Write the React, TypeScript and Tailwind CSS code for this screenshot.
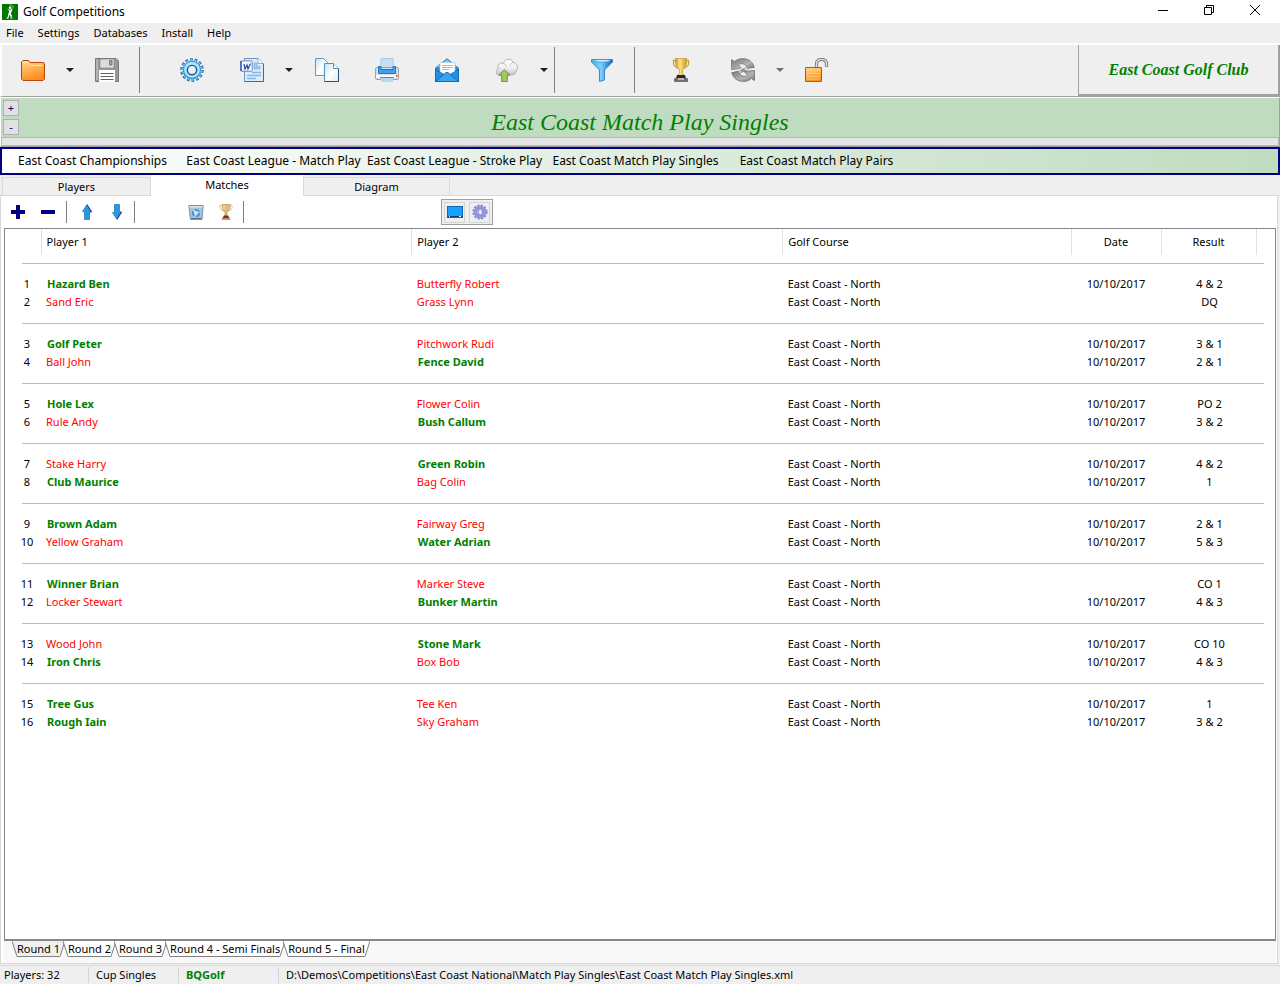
import { useState } from "react"
import type { ReactNode } from "react"

const menus = ["File", "Settings", "Databases", "Install", "Help"]

const competitions = [
  "East Coast Championships",
  "East Coast League - Match Play",
  "East Coast League - Stroke Play",
  "East Coast Match Play Singles",
  "East Coast Match Play Pairs",
]

const rounds = ["Round 1", "Round 2", "Round 3", "Round 4 - Semi Finals", "Round 5 - Final"]

interface Match {
  p1: string
  p2: string
  winner: 0 | 1 | 2
  date: string
  result: string
}

const D = "10/10/2017"

const matches: Match[] = [
  { p1: "Hazard Ben", p2: "Butterfly Robert", winner: 1, date: D, result: "4 & 2" },
  { p1: "Sand Eric", p2: "Grass Lynn", winner: 0, date: "", result: "DQ" },
  { p1: "Golf Peter", p2: "Pitchwork Rudi", winner: 1, date: D, result: "3 & 1" },
  { p1: "Ball John", p2: "Fence David", winner: 2, date: D, result: "2 & 1" },
  { p1: "Hole Lex", p2: "Flower Colin", winner: 1, date: D, result: "PO 2" },
  { p1: "Rule Andy", p2: "Bush Callum", winner: 2, date: D, result: "3 & 2" },
  { p1: "Stake Harry", p2: "Green Robin", winner: 2, date: D, result: "4 & 2" },
  { p1: "Club Maurice", p2: "Bag Colin", winner: 1, date: D, result: "1" },
  { p1: "Brown Adam", p2: "Fairway Greg", winner: 1, date: D, result: "2 & 1" },
  { p1: "Yellow Graham", p2: "Water Adrian", winner: 2, date: D, result: "5 & 3" },
  { p1: "Winner Brian", p2: "Marker Steve", winner: 1, date: "", result: "CO 1" },
  { p1: "Locker Stewart", p2: "Bunker Martin", winner: 2, date: D, result: "4 & 3" },
  { p1: "Wood John", p2: "Stone Mark", winner: 2, date: D, result: "CO 10" },
  { p1: "Iron Chris", p2: "Box Bob", winner: 1, date: D, result: "4 & 3" },
  { p1: "Tree Gus", p2: "Tee Ken", winner: 1, date: D, result: "1" },
  { p1: "Rough Iain", p2: "Sky Graham", winner: 1, date: D, result: "3 & 2" },
]

function Gradients() {
  return (
    <svg width="0" height="0" className="absolute" aria-hidden="true">
      <defs>
        <linearGradient id="orange" x1="0" y1="0" x2="0.4" y2="1">
          <stop offset="0" stopColor="#ffd890" />
          <stop offset="1" stopColor="#ff8c1c" />
        </linearGradient>
        <linearGradient id="blue" x1="0" y1="0" x2="0" y2="1">
          <stop offset="0" stopColor="#a4e0ff" />
          <stop offset="1" stopColor="#44a8ec" />
        </linearGradient>
        <linearGradient id="funnel" x1="0" y1="0" x2="1" y2="0">
          <stop offset="0" stopColor="#48b4f4" />
          <stop offset="0.45" stopColor="#7cd0fc" />
          <stop offset="1" stopColor="#0c5cc0" />
        </linearGradient>
        <linearGradient id="paper" x1="0" y1="0" x2="1" y2="1">
          <stop offset="0" stopColor="#c4dcec" />
          <stop offset="0.5" stopColor="#ffffff" />
          <stop offset="1" stopColor="#dcecf6" />
        </linearGradient>
        <linearGradient id="steel" x1="0" y1="0" x2="1" y2="1">
          <stop offset="0" stopColor="#747474" />
          <stop offset="0.6" stopColor="#b4b4b4" />
          <stop offset="1" stopColor="#6c6c6c" />
        </linearGradient>
        <linearGradient id="gold" x1="0" y1="0" x2="1" y2="0">
          <stop offset="0" stopColor="#c88c1c" />
          <stop offset="0.4" stopColor="#fce48c" />
          <stop offset="1" stopColor="#cc9420" />
        </linearGradient>
        <linearGradient id="cloud" x1="0" y1="0" x2="0" y2="1">
          <stop offset="0" stopColor="#ffffff" />
          <stop offset="0.5" stopColor="#f0f0f4" />
          <stop offset="1" stopColor="#b8b8c0" />
        </linearGradient>
      </defs>
    </svg>
  )
}

function Icon({ size = 24, children }: { size?: number; children: ReactNode }) {
  return (
    <svg width={size} height={size} viewBox={`0 0 ${size} ${size}`} aria-hidden="true" className="shrink-0">
      {children}
    </svg>
  )
}

const GolferIcon = () => (
  <Icon size={16}>
    <rect width="16" height="16" fill="#007800" />
    <path d="M9.500 5 11.500 2.500 7 .8" fill="none" stroke="#8cc08c" strokeWidth="0.800" />
    <circle cx="8" cy="3.800" r="1.200" fill="#fff" />
    <path d="M5 4.800 8 6 10.500 4.500 9.600 8 8.600 9.500 10 11.600 9.600 14 11 14.800H8.800L8.400 12 7.400 10.800 6.400 14.400 4.400 15 5.600 13 6.500 9.400 7.200 7Z" fill="#fff" />
  </Icon>
)

const FolderIcon = () => (
  <Icon>
    <path d="M.5 4.2 2 2.5H7.5L9 4.5H22.5L23.5 6V21L22 22.5H2L.5 21Z" fill="url(#orange)" stroke="#b4480c" />
    <path d="M2 4.5H7L9 7.5H22" fill="none" stroke="#ffe8b8" />
  </Icon>
)

const SaveIcon = () => (
  <Icon>
    <path d="M.5.5H21L23.5 3V23.5H.5Z" fill="#989898" stroke="#787878" />
    <path d="M2 1.5V22" stroke="#d0d0d0" />
    <path d="M5 1H19V10H5Z" fill="#dcdcdc" stroke="#888" strokeWidth="0.7" />
    <path d="M14.5 2.5H17V7H14.5Z" fill="#a0a0a0" stroke="#606060" strokeWidth="0.7" />
    <path d="M4 12H20V24H4Z" fill="#fff" />
    <path d="M5.5 15.5H18.5M5.5 18.5H18.5M5.5 21.5H18.5" stroke="#606060" />
  </Icon>
)

const GearIcon = () => (
  <Icon>
    <circle cx="12" cy="12" r="10.300" fill="none" stroke="#1c64a0" strokeWidth="3" strokeDasharray="2.700 1.923" />
    <circle cx="12" cy="12" r="8.800" fill="url(#blue)" stroke="#2474b4" strokeWidth="0.800" />
    <circle cx="12" cy="12" r="9.700" fill="none" stroke="#6cc0f4" strokeWidth="2.600" strokeDasharray="1.500 2.853" strokeDashoffset="-.5" />
    <circle cx="12" cy="12" r="6.600" fill="none" stroke="#b8e4fc" strokeWidth="1.800" />
    <circle cx="12" cy="12" r="4.600" fill="#efefef" stroke="#1c5c98" strokeWidth="1.400" />
  </Icon>
)

const WordIcon = () => (
  <Icon>
    <path d="M4.500.5H18L23.500 5.500V23.500H4.500Z" fill="#dcecfc" stroke="#6894c8" />
    <path d="M23.500 6V23.500H4.500" fill="none" stroke="#3c68b0" />
    <path d="M18 .5V5.500H23.500" fill="#fff" stroke="#88acd4" />
    <path d="M14 5H17V8.500H20V11H14Z" fill="#a8c8e8" stroke="#74a4d4" strokeWidth="0.600" />
    <path d="M12 14.500H21M7 17.500H21M7 20.500H16" stroke="#80b8e8" strokeWidth="1.400" />
    <rect x=".8" y="2.800" width="11.500" height="10.500" rx="1.500" fill="#f8faff" stroke="#7c9ccc" strokeWidth="1.200" />
    <path d="M1 3V13" stroke="#3458a4" strokeWidth="1.400" />
    <path d="M4 6 5 11 7 7 8 11 10.500 5.500" fill="none" stroke="#2c50a8" strokeWidth="1.300" />
  </Icon>
)

const CopyIcon = () => (
  <Icon>
    <path d="M.5.5H8.5L12.5 4.5V17.5H.5Z" fill="url(#paper)" stroke="#6498bc" />
    <path d="M9.500 5.500H18.500L23.500 10.500V23.500H9.500Z" fill="url(#paper)" stroke="#5890b8" />
    <path d="M18.5 5.5V10.5H23.5" fill="#fff" stroke="#5890b4" />
    <path d="M23.5 11V23.5H9.5" fill="none" stroke="#1c5484" />
  </Icon>
)

const PrinterIcon = () => (
  <Icon>
    <path d="M6 .5H18V10H6Z" fill="#c4e0f4" stroke="#a8ccdf" />
    <rect x=".5" y="9.500" width="23" height="12" rx="1.500" fill="#dcdce4" stroke="#a0a0ac" />
    <path d="M3.500 8.500H6V11.500H18V8.500H20.500V15.500H3.500Z" fill="#3ca0ec" stroke="#1c7ccc" />
    <path d="M1 17H23V20H1Z" fill="#f8f8fc" />
    <rect x="6" y="20" width="12" height="4" fill="#b4dcf0" />
    <path d="M5 19.500H19" stroke="#788090" />
    <rect x="21" y="17" width="1.500" height="2" fill="#f05020" />
  </Icon>
)

const MailIcon = () => (
  <Icon>
    <path d="M.5 10 12 .8 23.500 10V23.500H.5Z" fill="#2890e4" stroke="#1c7cc8" />
    <path d="M2 9 12 1.500 22 9Z" fill="#84ccf4" />
    <path d="M5 4.500H20V15L12 18 5 15Z" fill="#fff" stroke="#a8c4d8" strokeWidth="0.600" />
    <path d="M7 7.500H18M7 9.500H18M7 11.500H14" stroke="#a0a8b0" strokeWidth="0.800" />
    <path d="M.5 12 9 16.500H15L23.500 12V23.500H.5Z" fill="#2490e8" />
    <path d="M.5 23.500 11 14.500H13L23.500 23.500Z" fill="#38a4f4" stroke="#0c5cac" strokeWidth="0.800" />
    <path d="M.5 11.500 9 16.500M23.500 11.500 15 16.500" stroke="#0c5cac" strokeWidth="0.800" />
    <path d="M.5 11V23.500H23.500V11" fill="none" stroke="#1468b4" />
  </Icon>
)

const CloudIcon = () => (
  <Icon>
    <path
      d="M6 17.500C1 18.500 0 12 3 11 2 6.500 5.500 4 8.500 5.500 9.500 0 17 .2 18 4.500 22 4.500 24 10 21 13 20.500 17 17 17.500 15 16.500 12 19 9 18.500 6 17.500Z"
      fill="url(#cloud)"
      stroke="#a8a8b0"
      strokeWidth="0.900"
    />
    <path d="M8.500 5.500C11 6 11.500 8 11 9.500M18 4.500C16 5 15 6.500 15.500 8.500M3 11C4 10.200 5 10.500 6 11" fill="none" stroke="#c8c8d0" />
    <path d="M9.500 11.500 15 17H12.300V23.500H6.700V17H4Z" fill="#a4c860" stroke="#6c9034" strokeWidth="0.900" />
  </Icon>
)

const FunnelIcon = () => (
  <Icon>
    <path d="M1.500 1.500H22.500V4L14.500 12V22L9.500 23.500V12L1.500 4Z" fill="url(#funnel)" stroke="#2484cc" strokeWidth="0.900" />
    <ellipse cx="12" cy="2.800" rx="8.500" ry="1.400" fill="#c4e8fc" stroke="#3090d4" strokeWidth="0.700" />
  </Icon>
)

const TrophyIcon = () => (
  <Icon>
    <path d="M7 2.500H4.500V6Q5 9 9 10M17 2.500H19.500V6Q19 9 15 10" fill="none" stroke="#cca038" strokeWidth="1.300" />
    <path d="M6.500 .5H17.500Q18.500 9 13.500 12V15L15 17.500H9L10.500 15V12Q5.500 9 6.500 .5Z" fill="url(#gold)" stroke="#c09838" strokeWidth="0.700" />
    <path d="M8 17H16L17 20.500H7Z" fill="#282828" />
    <path d="M5.500 20.500H18.500V23.500H5.500Z" fill="#707070" stroke="#585858" strokeWidth="0.700" />
    <rect x="9" y="20" width="6" height="2" fill="#b8b8b8" />
  </Icon>
)

const RefreshIcon = () => (
  <Icon>
    <path d="M.5 11.500V1.500L3.500 3.500C9-1.500 21-.5 23.300 9.500L16.500 11C15.500 5.500 9.500 4.500 7.500 7L11 10.500Z" fill="url(#steel)" stroke="#787878" strokeWidth="0.800" />
    <path d="M23.500 12.500V22.500L20.500 20.500C15 25.500 3 24.500 .7 14.500L7.500 13C8.500 18.500 14.500 19.500 16.500 17L13 13.500Z" fill="url(#steel)" stroke="#707070" strokeWidth="0.800" />
    <path d="M7 13.500 15.500 8.500 14.500 11 18 11.500 9 15.500 10 13Z" fill="#909090" />
    <path d="M.5 13.500 8 12 14 8.500V11.500L23.500 10.500" fill="none" stroke="#f4f4f4" strokeWidth="0.800" />
  </Icon>
)

const LockIcon = () => (
  <Icon>
    <path d="M11.500 9V5.500C11.500 0 21.500 0 21.500 5.500V9" fill="none" stroke="#74747c" strokeWidth="3.200" />
    <path d="M11.500 9V5.500C11.500 0 21.500 0 21.500 5.500V8.500" fill="none" stroke="#e4e4ec" strokeWidth="1.400" />
    <path d="M.5 9.500H16.500V23.500H.5Z" fill="url(#orange)" stroke="#c45408" />
    <path d="M2 12.500H15M2 15.500H15M2 18.500H15M2 21H15" stroke="#ffd070" strokeWidth="0.900" />
  </Icon>
)

const PlusIcon = () => (
  <Icon size={16}>
    <path d="M1 6H6V1H10V6H15V10H10V15H6V10H1Z" fill="#000080" />
  </Icon>
)

const MinusIcon = () => (
  <Icon size={16}>
    <path d="M1 6H15V10H1Z" fill="#000080" />
  </Icon>
)

const UpIcon = () => (
  <Icon size={16}>
    <path d="M8 .5 12.500 7.500H10.500V15.500H5.500V7.500H3.500Z" fill="#2c98dc" stroke="#2878c0" strokeWidth="0.800" />
    <path d="M8 1 12.500 8H11" fill="none" stroke="#203c90" />
  </Icon>
)

const DownIcon = () => (
  <Icon size={16}>
    <path d="M8 15.500 12.500 8.500H10.500V.5H5.500V8.500H3.500Z" fill="#2c98dc" stroke="#2878c0" strokeWidth="0.800" />
    <path d="M8 15 12.500 8H11" fill="none" stroke="#203c90" />
  </Icon>
)

const BinIcon = () => (
  <Icon size={16}>
    <path d="M.8 1.500H15.200L14 15.500H2.500Z" fill="#a8c4d8" stroke="#6c8ca0" strokeWidth="0.900" />
    <path d="M1.500 2.800H14.500" stroke="#dce8f0" strokeWidth="1.500" />
    <circle cx="8" cy="9" r="3.200" fill="#c4e0fc" stroke="#4488e0" strokeWidth="1.800" strokeDasharray="5 1.700" />
    <path d="M3 14.500H13.500" stroke="#587080" />
  </Icon>
)

const CupIcon = () => (
  <Icon size={16}>
    <path d="M4 1.500H2V4Q3 7 6 7M12 1.500H14V4Q13 7 10 7" fill="none" stroke="#d8c09c" />
    <path d="M4 .5H12Q12.500 6 9 8.500V12H7V8.500Q3.500 6 4 .5Z" fill="#e8bc78" stroke="#c09458" strokeWidth="0.700" />
    <path d="M6 1.500V5" stroke="#fff0cc" />
    <path d="M6 11.500H10L12.500 15.500H3.500Z" fill="#703818" />
    <path d="M4 14.500H12" stroke="#c89060" />
  </Icon>
)

const ScreenIcon = () => (
  <Icon size={16}>
    <rect x=".5" y="2.500" width="15" height="11" fill="#18a0fc" stroke="#0c68b4" />
    <path d="M1 12.500H15" stroke="#0c3c70" />
    <path d="M2 12.500H3M12 12.500H14" stroke="#fff" />
  </Icon>
)

const CogIcon = () => (
  <Icon size={16}>
    <circle cx="8" cy="8" r="6.500" fill="none" stroke="#8484c8" strokeWidth="2.200" strokeDasharray="2.100 1.300" />
    <circle cx="8" cy="8" r="4.500" fill="none" stroke="#9494e0" strokeWidth="4" />
    <ellipse cx="8.300" cy="8" rx="2" ry="3" fill="#efefef" stroke="#6c6cb8" strokeWidth="0.700" />
  </Icon>
)

function Tool({ label, children }: { label: string; children: ReactNode }) {
  return (
    <button aria-label={label} className="flex h-12 w-[60px] shrink-0 items-center justify-center">
      {children}
    </button>
  )
}

function Arrow({ label, dim }: { label: string; dim?: boolean }) {
  return (
    <button aria-label={label} className={`flex h-12 w-[14px] shrink-0 items-center justify-center ${dim ? "text-[#707070]" : "text-[#202020]"}`}>
      <svg width="8" height="4" viewBox="0 0 8 4" aria-hidden="true">
        <path d="M0 0H8L4 4Z" fill="currentColor" />
      </svg>
    </button>
  )
}

function SmallTool({ label, children }: { label: string; children: ReactNode }) {
  return (
    <button aria-label={label} className="flex h-6 w-[30px] shrink-0 items-center justify-center">
      {children}
    </button>
  )
}

const Divider = () => <div className="h-[46px] w-px shrink-0 bg-[#808080]" />
const SmallDivider = () => <div className="h-[22px] w-px shrink-0 bg-[#808080]" />

function TitleBar() {
  return (
    <header className="flex h-[23px] items-center bg-white pr-[2px] pl-[2px]">
      <GolferIcon />
      <h1 className="ml-[5px] text-[12px]">Golf Competitions</h1>
      <div className="ml-auto flex h-full pb-[3px]">
        <button aria-label="Minimize" className="flex w-[46px] items-center justify-center">
          <svg width="10" height="10" aria-hidden="true"><path d="M0 5.500H10" stroke="#000" /></svg>
        </button>
        <button aria-label="Restore" className="flex w-[46px] items-center justify-center">
          <svg width="10" height="10" aria-hidden="true">
            <path d="M.5 2.500H7.500V9.500H.5ZM2.500 2V.5H9.500V7.500H8" fill="none" stroke="#000" />
          </svg>
        </button>
        <button aria-label="Close" className="flex w-[46px] items-center justify-center">
          <svg width="10" height="10" aria-hidden="true"><path d="M0 0 10 10M10 0 0 10" stroke="#000" /></svg>
        </button>
      </div>
    </header>
  )
}

function Toolbar() {
  return (
    <div className="flex h-[54px] border-t-2 border-b border-l-2 border-t-white border-b-[#a0a0a0] border-l-white">
      <div className="flex min-w-0 flex-1 items-center pb-[2px] pl-px">
        <Tool label="Open"><FolderIcon /></Tool>
        <Arrow label="Open recent" />
        <Tool label="Save"><SaveIcon /></Tool>
        <div className="w-[2px]" />
        <Divider />
        <div className="w-[22px]" />
        <Tool label="Options"><GearIcon /></Tool>
        <Tool label="Export to Word"><WordIcon /></Tool>
        <Arrow label="Export options" />
        <div className="w-px" />
        <Tool label="Copy"><CopyIcon /></Tool>
        <Tool label="Print"><PrinterIcon /></Tool>
        <Tool label="Mail"><MailIcon /></Tool>
        <Tool label="Upload"><CloudIcon /></Tool>
        <Arrow label="Upload options" />
        <div className="w-[3px]" />
        <Divider />
        <div className="w-[17px]" />
        <Tool label="Filter"><FunnelIcon /></Tool>
        <div className="w-[2px]" />
        <Divider />
        <div className="w-4" />
        <Tool label="Results"><TrophyIcon /></Tool>
        <div className="w-[2px]" />
        <Tool label="Refresh"><RefreshIcon /></Tool>
        <Arrow label="Refresh options" dim />
        <Tool label="Unlock"><LockIcon /></Tool>
      </div>
      <div className="flex w-[202px] shrink-0 items-center justify-center border-r-2 border-b-2 border-l border-[#a0a0a0] font-['Liberation_Serif',serif] text-[16px] font-bold text-[#008000] italic">
        East Coast Golf Club
      </div>
    </div>
  )
}

function MatchTable() {
  const pairs = matches.filter((_, i) => i % 2 === 0).map((m, i) => [m, matches[i * 2 + 1]])
  const name = (won: boolean) => (won ? "pl-[6px] font-bold text-[#008000]" : "pl-[5px] text-[#ff0000]")

  return (
    <table className="w-full table-fixed border-collapse text-[11px] leading-[18px]">
      <colgroup>
        <col className="w-[36px]" />
        <col className="w-[29.2%]" />
        <col className="w-[29.2%]" />
        <col />
        <col className="w-[90px]" />
        <col className="w-[95px]" />
        <col className="w-[19px]" />
      </colgroup>
      <thead>
        <tr className="h-[26px]">
          <td />
          {["Player 1", "Player 2", "Golf Course"].map((h) => (
            <th key={h} className="border-l border-[#e0e0e0] pl-[5px] text-left font-normal">{h}</th>
          ))}
          <th className="border-l border-[#e0e0e0] font-normal">Date</th>
          <th className="border-x border-[#e0e0e0] font-normal">Result</th>
          <td />
        </tr>
      </thead>
      {pairs.map((pair, g) => (
        <tbody key={g}>
          <tr>
            <td colSpan={7} className={g === 0 ? "h-5 pt-2 pr-[11px] pl-[17px]" : "h-6 pt-3 pr-[11px] pl-[17px]"}>
              <div className="h-3 border-t border-[#b0bcd8]" />
            </td>
          </tr>
          {pair.map((m, i) => (
            <tr key={i} className="h-[18px] whitespace-nowrap">
              <td className="pl-[8px] text-center">{g * 2 + i + 1}</td>
              <td className={name(m.winner === 1)}>{m.p1}</td>
              <td className={name(m.winner === 2)}>{m.p2}</td>
              <td className="pl-[5px]">East Coast - North</td>
              <td className="text-center">{m.date}</td>
              <td className="pl-[2px] text-center">{m.result}</td>
              <td />
            </tr>
          ))}
        </tbody>
      ))}
    </table>
  )
}

function RoundTab({ label, active, onClick }: { label: string; active: boolean; onClick: () => void }) {
  return (
    <button onClick={onClick} className="-ml-[2px] flex h-4 items-stretch text-[11px] leading-4">
      <svg width="5" height="16" viewBox="0 0 5 16" aria-hidden="true">
        <path d="M0 0 5 15.5V0Z" fill={active ? "#efefef" : "#fff"} />
        <path d="M0 0 5 15.5" stroke="#808080" />
      </svg>
      <span className={`border-b border-[#808080] ${active ? "bg-[#efefef]" : "bg-white"}`}>{label}</span>
      <svg width="5" height="16" viewBox="0 0 5 16" aria-hidden="true">
        <path d="M5 0 0 15.5V0Z" fill={active ? "#efefef" : "#fff"} />
        <path d="M5 0 0 15.5" stroke="#808080" />
      </svg>
    </button>
  )
}

export default function App() {
  const [round, setRound] = useState(0)

  return (
    <div className="flex min-h-screen flex-col bg-[#efefef] font-['Noto_Sans',sans-serif] text-[12px] text-black">
      <Gradients />
      <TitleBar />

      <nav className="flex h-5 items-center gap-[14px] pl-[6px] text-[11px]">
        {menus.map((m) => (
          <button key={m}>{m}</button>
        ))}
      </nav>

      <Toolbar />

      {/* Competition heading */}
      <section className="h-[50px] border-t border-r border-b border-l border-t-white border-r-[#a0a0a0] border-b-[#a0a0a0] border-l-white">
        <div className="flex h-[39px] items-center bg-[#c0dcc0] pl-[2px]">
          <div className="flex flex-col gap-[3px]">
            {["+", "-"].map((s) => (
              <button key={s} className="flex size-4 items-center justify-center border border-[#b0b0b0] bg-[#e1e1e1] text-[11px] text-[#000080]">
                {s}
              </button>
            ))}
          </div>
          <h2 className="flex-1 pt-2 pr-[18px] text-center font-['Liberation_Serif',serif] text-[24px] leading-[30px] text-[#008000] italic">
            East Coast Match Play Singles
          </h2>
        </div>
        <div className="h-[9px] border border-[#b8b8b8] bg-[#e5e5e5]" />
      </section>

      {/* Competition shortcuts */}
      <nav className="flex h-7 border-2 border-[#000080] bg-linear-to-r from-white to-[#c0dcc0]">
        {competitions.map((c) => (
          <button key={c} className="w-[181px] shrink-0 text-center whitespace-nowrap">{c}</button>
        ))}
      </nav>

      <div role="tablist" className="flex h-[21px] items-end border-b border-[#d9d9d9] pl-[2px] text-[11px]">
        <button role="tab" className="h-[18px] w-[149px] border border-b-0 border-[#d9d9d9] pt-px">Players</button>
        <button role="tab" aria-selected="true" className="-mb-px h-[21px] w-[152px] bg-white">Matches</button>
        <button role="tab" className="h-[18px] w-[147px] border border-b-0 border-[#d9d9d9] pt-px">Diagram</button>
      </div>

      <main className="mr-[2px] flex flex-1 flex-col border-r border-b border-l border-[#d9d9d9] bg-white pr-px pl-[3px]">
        <div className="-ml-px flex h-8 items-center">
          <SmallTool label="Add match"><PlusIcon /></SmallTool>
          <SmallTool label="Remove match"><MinusIcon /></SmallTool>
          <div className="w-[3px]" />
          <SmallDivider />
          <div className="w-[5px]" />
          <SmallTool label="Move up"><UpIcon /></SmallTool>
          <SmallTool label="Move down"><DownIcon /></SmallTool>
          <div className="w-[2px]" />
          <SmallDivider />
          <div className="w-[46px]" />
          <SmallTool label="Clear"><BinIcon /></SmallTool>
          <SmallTool label="Winner"><CupIcon /></SmallTool>
          <div className="w-[2px]" />
          <SmallDivider />
          <div className="ml-[197px] flex h-[26px] w-[52px] items-center justify-center gap-1 border border-[#a0a0a0] bg-[#efefef]">
            <button aria-label="Screen" className="flex size-[21px] items-center justify-center border border-[#d4d4d4]"><ScreenIcon /></button>
            <button aria-label="Settings" className="flex size-[21px] items-center justify-center border border-[#d4d4d4]"><CogIcon /></button>
          </div>
        </div>

        <div className="flex-1 border border-b-2 border-[#828790]">
          <MatchTable />
        </div>

        <div className="flex h-[22px] bg-[#f8f8f8] pl-[10px]">
          {rounds.map((r, i) => (
            <RoundTab key={r} label={r} active={i === round} onClick={() => setRound(i)} />
          ))}
        </div>
      </main>

      <footer className="mt-px flex h-[19px] items-center border-t border-[#d9d9d9] text-[11px] whitespace-nowrap">
        <span className="w-[89px] border-r border-[#d4d4d4] pl-1">Players: 32</span>
        <span className="w-[90px] border-r border-[#d4d4d4] pl-[7px]">Cup Singles</span>
        <span className="w-[100px] border-r border-[#d4d4d4] pl-[7px] font-bold text-[#008000]">BQGolf</span>
        <span className="pl-[7px]">D:\Demos\Competitions\East Coast National\Match Play Singles\East Coast Match Play Singles.xml</span>
      </footer>
    </div>
  )
}
